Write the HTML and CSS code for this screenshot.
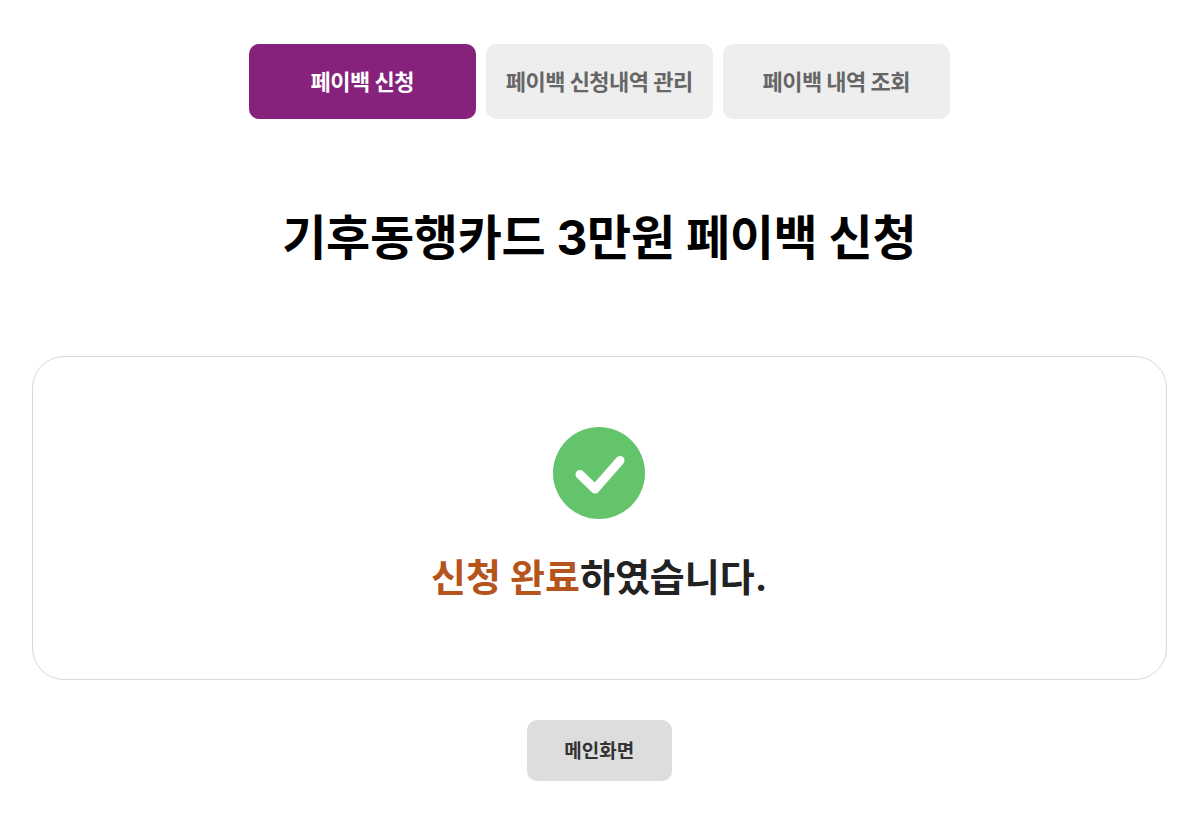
FILE: index.html
```html
<!DOCTYPE html>
<html lang="ko">
<head>
<meta charset="utf-8">
<title>기후동행카드 3만원 페이백 신청</title>
<link rel="stylesheet" href="styles.css">
</head>
<body>
<div class="page">
  <nav class="tabs">
    <a class="tab active">페이백 신청</a>
    <a class="tab">페이백 신청내역 관리</a>
    <a class="tab">페이백 내역 조회</a>
  </nav>
  <h1 class="title">기후동행카드 3만원 페이백 신청</h1>
  <section class="card">
    <svg class="check" viewBox="0 0 92 92" width="92" height="92">
      <circle cx="46" cy="46" r="46" fill="#63c46c"/>
      <path d="M27 47.5 L42 62 L67 33.5" fill="none" stroke="#fff" stroke-width="9" stroke-linecap="round" stroke-linejoin="round"/>
    </svg>
    <p class="msg"><span class="hl">신청 완료</span>하였습니다.</p>
  </section>
  <div class="actions"><a class="main-btn">메인화면</a></div>
</div>
</body>
</html>
```
FILE: styles.css
```css
* { box-sizing: border-box; }
html, body { margin: 0; padding: 0; background: #fff; }
body { font-family: Inter, "Noto Sans CJK KR", sans-serif; }
.page { padding: 44px 33px 0 31.5px; display: flex; flex-direction: column; align-items: stretch; }
.tabs { display: flex; justify-content: center; gap: 10px; }
.tab { width: 227px; height: 75px; padding-bottom: 3px; border-radius: 10px; background: #eee; color: #666; font-size: 22px; font-weight: 700; display: flex; align-items: center; justify-content: center; letter-spacing: -0.5px; }
.tab.active { background: #86217c; color: #fff; }
.title { margin: 88px 0 0; height: 62px; line-height: 62px; text-align: center; font-size: 48px; font-weight: 700; color: #000; letter-spacing: -0.3px; }
.card { margin-top: 87px; height: 324px; border: 1px solid #d9d9d9; border-radius: 32px; display: flex; flex-direction: column; align-items: center; padding-top: 70px; }
.check { display: block; }
.msg { margin: 31px 0 0; font-size: 38px; line-height: 54px; font-weight: 700; color: #222; letter-spacing: 0; }
.hl { color: #b5551d; }
.actions { display: flex; justify-content: center; margin-top: 40px; }
.main-btn { width: 145px; height: 61px; padding-bottom: 2px; border-radius: 10px; background: #ddd; color: #333; font-size: 19px; font-weight: 700; display: flex; align-items: center; justify-content: center; }
```
